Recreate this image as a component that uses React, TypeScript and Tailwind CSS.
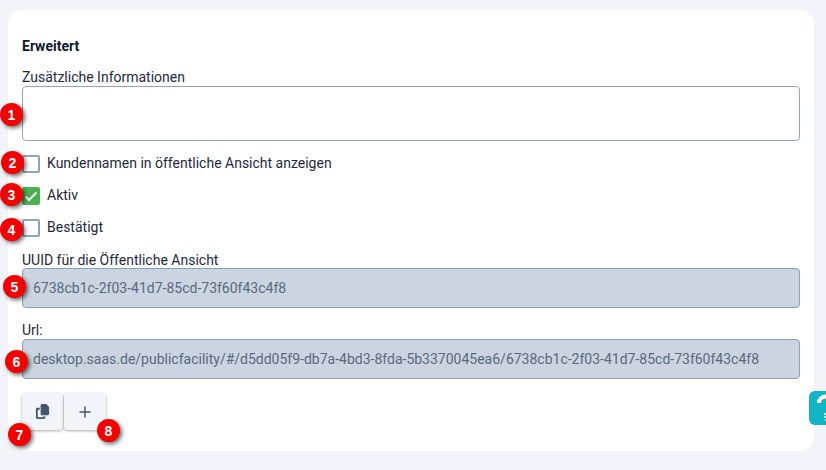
import React from "react";
import { FaCopy } from "react-icons/fa6";

function Badge({ n, className }: { n: number; className: string }) {
  return (
    <div
      className={
        "absolute flex h-[23px] w-[23px] items-center justify-center rounded-full bg-[#f40000] text-[14px] font-bold leading-none text-white shadow-[2px_2px_4px_rgba(0,0,0,0.6)] " +
        className
      }
      style={{ fontFamily: '"Liberation Sans", sans-serif' }}
    >
      {n}
    </div>
  );
}

function Check({ checked, label }: { checked?: boolean; label: string }) {
  return (
    <div className="flex h-[18px] items-center gap-[7px]">
      {checked ? (
        <div className="flex h-[18px] w-[18px] items-center justify-center rounded-[2px] bg-[#4caf50]">
          <svg width="14" height="12" viewBox="0 0 14 12" fill="none">
            <path d="M1.5 6.500 5 10 12.500 2.500" stroke="#f1f5f9" strokeWidth="2" />
          </svg>
        </div>
      ) : (
        <div className="h-[18px] w-[18px] rounded-[2px] border-2 border-[#94a3b8] bg-white" />
      )}
      <span className="-mt-[2px] text-[14px] leading-[18px]">{label}</span>
    </div>
  );
}

function ReadOnly({ value }: { value: string }) {
  return (
    <div className="flex h-10 items-center rounded-[4px] border border-[#8e9db8] bg-[#cbd5e1] px-[10px] text-[14px] text-[#5a6980]">
      {value}
    </div>
  );
}

export default function App() {
  return (
    <div
      className="relative h-[470px] w-[826px] overflow-hidden bg-[#f1f5f9] pl-2 pt-[10px] text-[#1e293b]"
      style={{ fontFamily: "Roboto, sans-serif" }}
    >
      <div className="h-[441px] w-[806px] rounded-[14px] bg-white px-[14px] pt-[28px]">
        <div className="text-[14px] font-bold leading-4 text-[#0f172a]">Erweitert</div>
        <div className="mt-[15px] text-[14px] leading-[16px]">Zusätzliche Informationen</div>
        <div className="mt-[1px] h-[55px] rounded-[4px] border border-[#94a3b8] bg-white" />
        <div className="mt-[14px] flex flex-col gap-[14px]">
          <Check label="Kundennamen in öffentliche Ansicht anzeigen" />
          <Check checked label="Aktiv" />
          <Check label="Bestätigt" />
        </div>
        <div className="mt-[15px] text-[14px] leading-4">UUID für die Öffentliche Ansicht</div>
        <ReadOnly value="6738cb1c-2f03-41d7-85cd-73f60f43c4f8" />
        <div className="mt-[14px] text-[14px] leading-[17px]">Url:</div>
        <ReadOnly value="desktop.saas.de/publicfacility/#/d5dd05f9-db7a-4bd3-8fda-5b3370045ea6/6738cb1c-2f03-41d7-85cd-73f60f43c4f8" />
        <div className="mt-[14px] flex gap-px">
          <button className="flex h-[37px] w-[41px] items-center justify-center rounded-[4px] bg-[#f1f5f9] text-[#475569] shadow-[0_1px_3px_rgba(0,0,0,0.35)]">
            <FaCopy size={15} />
          </button>
          <button className="flex h-[37px] w-[42px] items-center justify-center rounded-[4px] bg-[#f1f5f9] shadow-[0_1px_3px_rgba(0,0,0,0.35)]">
            <svg width="12" height="12" viewBox="0 0 12 12" fill="none">
              <path d="M6 .5v11M.5 6h11" stroke="#475569" strokeWidth="1.500" />
            </svg>
          </button>
        </div>
      </div>

      <Badge n={1} className="left-[0px] top-[103px]" />
      <Badge n={2} className="left-[1px] top-[151px]" />
      <Badge n={3} className="left-0 top-[183px]" />
      <Badge n={4} className="left-0 top-[218px]" />
      <Badge n={5} className="left-[3px] top-[275px]" />
      <Badge n={6} className="left-[5px] top-[350px]" />
      <Badge n={7} className="left-[8px] top-[423px]" />
      <Badge n={8} className="left-[97px] top-[419px]" />

      <div className="absolute left-[809px] top-[391px] h-[34px] w-[24px] overflow-hidden rounded-[6px] bg-[#11b5c4]">
        <svg width="24" height="34" viewBox="0 0 24 34" fill="none">
          <path d="M10 12c0-4 3-6.500 7-6.500s7 2.500 7 6.500c0 3-3 4-5 6" stroke="#fff" strokeWidth="4" />
          <path d="M15 23h9M15 26h9M16 29h8" stroke="#fff" strokeWidth="1.500" />
        </svg>
      </div>
    </div>
  );
}
